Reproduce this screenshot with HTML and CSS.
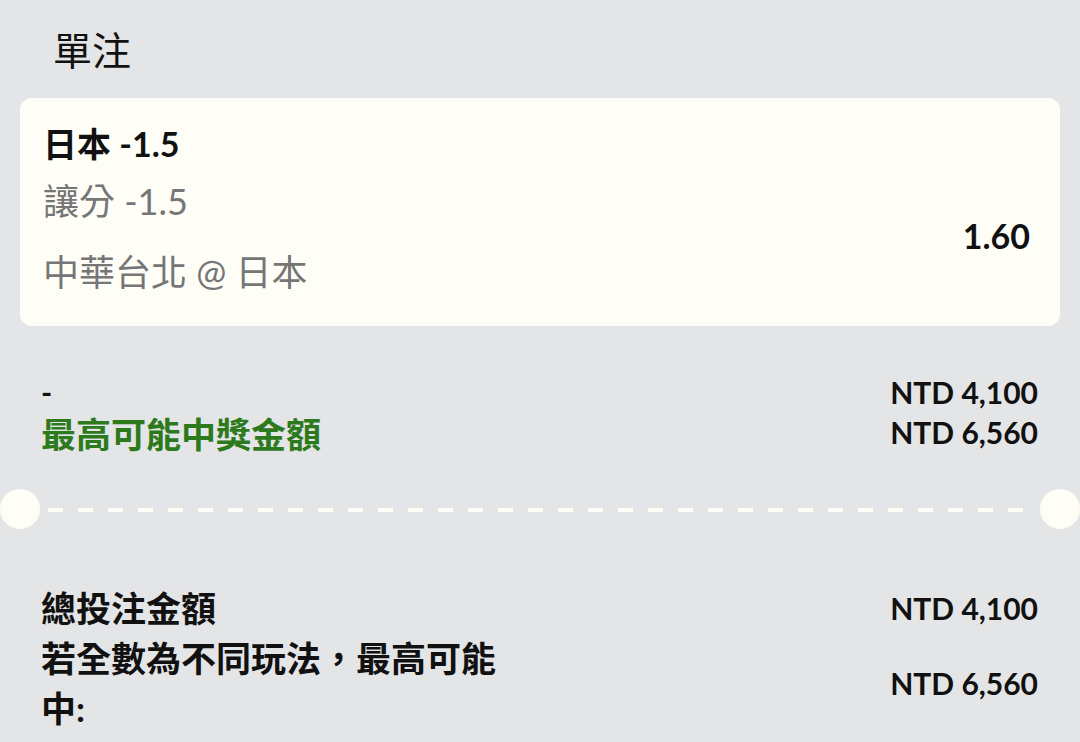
FILE: index.html
```html
<!DOCTYPE html>
<html lang="zh-Hant">

<head>
  <meta charset="utf-8">
  <meta name="viewport" content="width=device-width">
  <title>單注</title>
  <link rel="stylesheet" href="styles.css">
</head>

<body>
  <h1 class="page-title">單注</h1>

  <div class="bet-card">
    <div class="bet-title">日本 -1.5</div>
    <div class="bet-body">
      <div class="bet-info">
        <div class="bet-market">讓分 -1.5</div>
        <div class="bet-match">中華台北 @ 日本</div>
      </div>
      <div class="bet-odds">1.60</div>
    </div>
  </div>

  <div class="summary">
    <div class="summary-dash">-</div>
    <div class="amount">NTD 4,100</div>
    <div class="summary-win">最高可能中獎金額</div>
    <div class="amount">NTD 6,560</div>
  </div>

  <div class="divider">
    <span class="notch"></span>
    <span class="dashes"></span>
    <span class="notch"></span>
  </div>

  <div class="totals">
    <div class="totals-label">總投注金額</div>
    <div class="amount">NTD 4,100</div>
    <div class="totals-label">若全數為不同玩法，最高可能中:</div>
    <div class="amount">NTD 6,560</div>
  </div>
</body>

</html>
```

FILE: styles.css
```css
html {
  background: #e4e5e7;
}

body {
  margin: 0;
  font-family: Lato, "Noto Sans CJK TC", sans-serif;
  color: #111;
}

.page-title {
  margin: 0;
  padding: 28px 0 0 53px;
  font-size: 39px;
  font-weight: 400;
  line-height: 44px;
}

.bet-card {
  margin: 26px 20px 0;
  padding: 26px 30px 34px 23px;
  background: #fefef6;
  border-radius: 12px;
}

.bet-title {
  font-size: 34px;
  font-weight: 700;
  line-height: 40px;
}

.bet-body {
  display: flex;
  align-items: center;
  justify-content: space-between;
}

.bet-market,
.bet-match {
  font-size: 36px;
  line-height: 40px;
  color: #767676;
}

.bet-market {
  margin-top: 17px;
}

.bet-match {
  margin-top: 31px;
}

.bet-odds {
  padding-top: 14px;
  font-size: 34px;
  font-weight: 700;
}

.summary {
  display: grid;
  grid-template-columns: 1fr auto;
  grid-auto-rows: 40px;
  align-items: center;
  padding: 46px 42px 0 41px;
}

.summary-dash {
  font-size: 30px;
  font-weight: 700;
}

.summary-win {
  padding-top: 4px;
  font-size: 35px;
  font-weight: 700;
  line-height: 42px;
  color: #2d7a1d;
}

.amount {
  font-size: 30px;
  font-weight: 700;
  text-align: right;
}

.divider {
  display: flex;
  align-items: center;
  margin-top: 37px;
  height: 40px;
}

.notch {
  width: 40px;
  height: 40px;
  border-radius: 50%;
  background: #fefef6;
}

.dashes {
  flex: 1;
  height: 4px;
  margin: 2px 8px 0;
  background: repeating-linear-gradient(to right, #fefef6 0 15px, transparent 15px 30px);
}

.totals {
  display: grid;
  grid-template-columns: 470px 1fr;
  align-items: center;
  padding: 54px 42px 0 41px;
}

.totals-label {
  font-size: 35px;
  font-weight: 700;
  line-height: 50px;
}
```
